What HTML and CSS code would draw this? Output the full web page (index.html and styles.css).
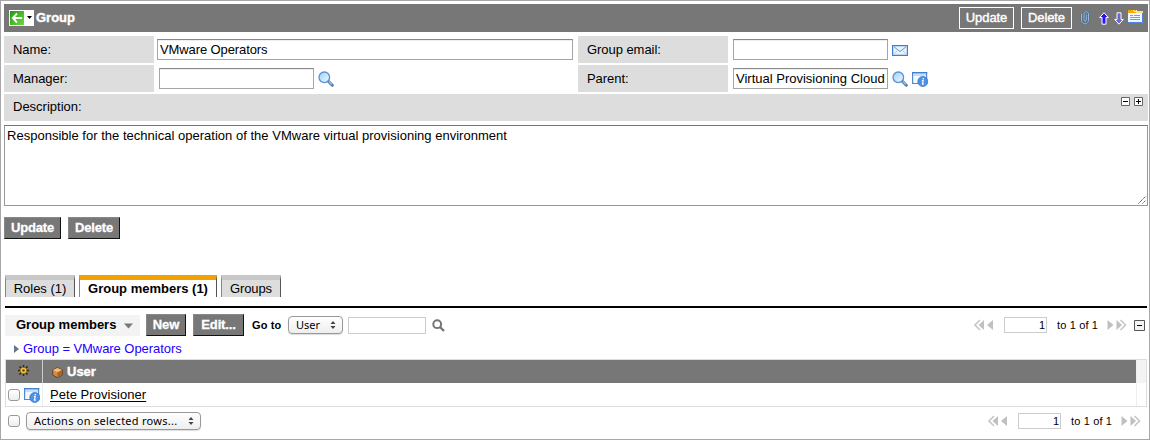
FILE: index.html
```html
<!DOCTYPE html>
<html lang="en">
<head>
<meta charset="utf-8">
<title>Group</title>
<link rel="stylesheet" href="styles.css">
</head>
<body>
<svg class="defs" width="0" height="0">
  <defs>
    <linearGradient id="green" x1="0" y1="0" x2="1" y2="1"><stop offset="0" stop-color="#1f9a10"/><stop offset="1" stop-color="#6bdc3c"/></linearGradient>
    <linearGradient id="gloss" x1="0" y1="0" x2="1" y2="1"><stop offset="0" stop-color="#9cd0fa"/><stop offset="1" stop-color="#f2faff"/></linearGradient>
    <symbol id="lookup" viewBox="0 0 16 16">
      <path d="M10.300 10.200l4 4" stroke="#4f79ad" stroke-width="3" stroke-linecap="round"/>
      <path d="M10.800 10.400l3.200 3.200" stroke="#9cc0e8" stroke-width="1.400"/>
      <circle cx="6.300" cy="6.300" r="5.300" fill="url(#gloss)" stroke="#5b90d4" stroke-width="1.300"/>
    </symbol>
    <symbol id="info" viewBox="0 0 16 16">
      <path d="M.6 1.500h14v11H.6z" fill="#f3f9ff" stroke="#5587cf" stroke-width="1.200"/>
      <path d="M0 1h15.200v1.500H0z" fill="#3f7fd6"/><path d="M1.200 3.500h13v1H1.200z" fill="#9bc3f3"/>
      <circle cx="10.800" cy="10.500" r="5" fill="#4b92e8" stroke="#2f70c4" stroke-width=".7"/>
      <path d="M11.300 7v1.400M9.800 9.500h1.300l-.6 3.700h1.300" fill="none" stroke="#fff" stroke-width="1.200"/>
    </symbol>
    <symbol id="prev" viewBox="0 0 20 12">
      <path d="M10 1v10L4.500 6z" fill="#c0c0c0"/><path d="M6 1L1 6l5 5" fill="none" stroke="#c8c8c8" stroke-width="1.700"/>
      <path d="M19 1v10L13 6z" fill="#c0c0c0"/>
    </symbol>
    <symbol id="next" viewBox="0 0 20 12">
      <path d="M.5 1v10l6-5z" fill="#c0c0c0"/>
      <path d="M9.500 1v10L15 6z" fill="#c0c0c0"/><path d="M13.500 1l5 5-5 5" fill="none" stroke="#c8c8c8" stroke-width="1.700"/>
    </symbol>
    <symbol id="updown" viewBox="0 0 6 8"><path d="M3 0l2.500 3h-5zM3 8l2.500-3h-5z" fill="#444"/></symbol>
  </defs>
</svg>
<main class="window">
  <header class="titlebar">
    <span class="back">
      <svg width="25" height="16" viewBox="0 0 25 16"><path d="M0 0h25v16H0z" fill="#fff"/><path d="M1 1h14v14H1z" fill="url(#green)"/><path d="M13 8H4M8 3.500L3.800 8 8 12.500" fill="none" stroke="#fff" stroke-width="1.900"/><path d="M18 6h5l-2.500 3z" fill="#000"/></svg>
    </span>
    <h1 class="title">Group</h1>
    <button class="outline update">Update</button>
    <button class="outline delete">Delete</button>
    <svg class="clip" width="10" height="14" viewBox="0 0 10 14"><path d="M1.500 3v6.500c0 4.500 7 4.500 7 0V3c0-3-4.500-3-4.500 0v6c0 1.800 2.300 1.800 2.300 0V3.500" fill="none" stroke="#43688c" stroke-width="1.700"/><path d="M1.500 3v6.500c0 4.500 7 4.500 7 0V3c0-3-4.500-3-4.500 0v6c0 1.800 2.300 1.800 2.300 0V3.500" fill="none" stroke="#a8cdec" stroke-width=".8"/></svg>
    <svg class="up" width="10" height="13" viewBox="0 0 10 13"><path d="M5 .8l4.300 4.700H7v6.700H3V5.500H.7z" fill="#2a10ff" stroke="#fff"/></svg>
    <svg class="down" width="10" height="13" viewBox="0 0 10 13"><path d="M5 12.200L.7 7.500H3V.8h4v6.700h2.300z" fill="#6a6ac6" stroke="#fff"/></svg>
    <svg class="form-icon" width="16" height="14" viewBox="0 0 16 14"><path d="M1 1h15v12H1z" fill="#eef6ff"/><path d="M1 0h8v3H1z" fill="#f5a800"/><path d="M9 1h7v2H9z" fill="#ffe08a"/><path d="M6 0l2 2 2-2" fill="none" stroke="#fff3c0"/><path d="M1 12.500h14.500V3" fill="none" stroke="#4b86dd"/><path d="M3 5.500h3M7 5.500h6M3 7.500h10M3 9.500h10" stroke="#6ba0e6"/></svg>
  </header>

  <section class="fields">
    <div class="label">Name:</div>
    <div class="cell"><div class="input wide tight">VMware Operators</div></div>
    <div class="label">Group email:</div>
    <div class="cell ref"><div class="input"></div>
      <svg class="mail" width="16" height="11" viewBox="0 0 16 11"><path d="M.6.600h14.800v9.800H.6z" fill="#e6f3ff" stroke="#3c7ed6" stroke-width="1.200"/><path d="M1.500 9.500l4-4M14.500 9.500l-4-4" fill="none" stroke="#b5cfec"/><path d="M2 1.800l6 4.700 6-4.700" fill="none" stroke="#55799f" stroke-width=".8"/></svg>
    </div>
    <div class="label">Manager:</div>
    <div class="cell manager"><div class="input"></div><svg class="icon" width="16" height="16"><use href="#lookup"/></svg></div>
    <div class="label">Parent:</div>
    <div class="cell ref"><div class="input">Virtual Provisioning Cloud</div><svg class="icon" width="16" height="16"><use href="#lookup"/></svg><svg class="icon" width="16" height="16"><use href="#info"/></svg></div>
  </section>

  <div class="description-head"><span>Description:</span>
    <div class="sizers">
      <svg width="9" height="9" viewBox="0 0 9 9"><path d="M.5.5h8v8h-8z" fill="#fff" stroke="#666"/><path d="M2 4.500h5" stroke="#000"/></svg>
      <svg width="9" height="9" viewBox="0 0 9 9"><path d="M.5.5h8v8h-8z" fill="#fff" stroke="#666"/><path d="M2 4.500h5M4.500 2v5" stroke="#000"/></svg>
    </div>
  </div>
  <div class="textarea"><span>Responsible for the technical operation of the VMware virtual provisioning environment</span>
    <svg class="grip" width="8" height="8" viewBox="0 0 8 8"><path d="M.5 7.500l7-7M4.500 7.500l3-3" stroke="#555" stroke-dasharray="1.400 .5"/></svg>
  </div>
  <div class="actions"><button class="solid update-b">Update</button><button class="solid delete-b">Delete</button></div>

  <nav class="tabs">
    <a class="tab roles">Roles (1)</a>
    <a class="tab active">Group members (1)</a>
    <a class="tab groups">Groups</a>
  </nav>

  <section class="list">
    <div class="toolbar">
      <div class="list-title"><span>Group members</span><svg width="9" height="6" viewBox="0 0 9 6"><path d="M0 .5h9L4.500 5.500z" fill="#777"/></svg></div>
      <button class="solid new">New</button>
      <button class="solid edit">Edit...</button>
      <b class="goto">Go to</b>
      <div class="select user"><span>User</span><svg width="6" height="8"><use href="#updown"/></svg></div>
      <div class="search-box"></div>
      <svg class="search" width="13" height="13" viewBox="0 0 13 13"><circle cx="5.200" cy="5.200" r="3.900" fill="none" stroke="#777" stroke-width="2"/><path d="M8 8l4 4" stroke="#777" stroke-width="2.400"/></svg>
      <div class="pager">
        <svg width="20" height="12"><use href="#prev"/></svg><div class="page">1</div><span>to 1 of 1</span><svg width="20" height="12"><use href="#next"/></svg>
        <svg class="collapse" width="11" height="11" viewBox="0 0 11 11"><path d="M.5.5h10v10H.5z" fill="#f4f4f4" stroke="#555"/><path d="M3 5.500h5" stroke="#000"/></svg>
      </div>
    </div>
    <div class="crumb"><svg width="5" height="8" viewBox="0 0 5 8"><path d="M0 0l5 4-5 4z" fill="#667788"/></svg><a>Group = VMware Operators</a></div>
    <div class="table">
      <div class="th gear-cell"><svg width="11" height="11" viewBox="0 0 11 11"><path d="M5.500 0v11M0 5.500h11M1.500 1.500l8 8M9.500 1.500l-8 8" stroke="#2f250d" stroke-width="1.500"/><circle cx="5.500" cy="5.500" r="3.300" fill="#f4c34a" stroke="#7c5a0b" stroke-width=".7"/><circle cx="5.500" cy="5.500" r="1.200" fill="#5c4711"/></svg></div>
      <div class="th user-head"><svg width="11" height="11" viewBox="0 0 11 11"><path d="M.7 3L5.500.700l4.800 2.300v5L5.500 10.600.700 8z" fill="#d08c45" stroke="#5e3511" stroke-width=".8"/><path d="M1 3.100L5.500 5.300 10 3.100 5.500 1z" fill="#f5bd78"/><path d="M5.500 5.300L10 3.200v4.700l-4.500 2.300z" fill="#a5662b"/></svg><b>User</b></div>
      <div class="gutter head"></div>
      <div class="row-tools"><i class="check"></i><svg width="16" height="16"><use href="#info"/></svg></div>
      <div class="row-name"><a>Pete Provisioner</a></div>
      <div class="gutter"></div>
    </div>
    <div class="footer">
      <i class="check"></i>
      <div class="select bulk"><span>Actions on selected rows...</span><svg width="6" height="8"><use href="#updown"/></svg></div>
      <div class="pager"><svg width="20" height="12"><use href="#prev"/></svg><div class="page">1</div><span>to 1 of 1</span><svg width="20" height="12"><use href="#next"/></svg></div>
    </div>
  </section>
</main>
</body>
</html>
```
FILE: styles.css
```css
* { box-sizing: border-box; }
body { margin: 0; background: #fff; color: #000; font: 13px "Liberation Sans", Arial, sans-serif; }
svg { display: block; flex: none; }
.defs { position: absolute; }
.window { width: 1150px; height: 440px; border: 1px solid #a8a8a8; padding: 3px 1px 0 3px; overflow: hidden; white-space: nowrap; }
button { font: 13px "Liberation Sans", Arial, sans-serif; color: #fff; padding: 0; border-radius: 0; flex: none; }

.titlebar { height: 28px; background: #777; display: flex; align-items: center; padding-left: 5px; }
.title { margin: 0 auto 0 2px; color: #fff; font-size: 13px; line-height: 16px; -webkit-text-stroke: .4px #fff; }
.outline { height: 22px; background: transparent; border: 1px solid #fff; -webkit-text-stroke: .4px #fff; padding-bottom: 2px; letter-spacing: -.1px; }
.update { width: 55px; margin-right: 7px; }
.delete { width: 51px; margin-right: 8px; }
.clip { margin-right: 9px; }
.up { margin-right: 5px; }
.down { margin-right: 3px; }
.form-icon { margin: 0 5px 2px 0; }

.fields { display: grid; grid-template-columns: 150px 424px 150px 1fr; grid-template-rows: 27px 27px; row-gap: 2px; margin-top: 4px; }
.label { background: #ddd; padding-left: 9px; line-height: 27px; letter-spacing: -.05px; }
.cell { display: flex; align-items: center; padding-left: 3px; }
.cell.manager, .cell.ref { padding-left: 5px; }
.input { width: 155px; height: 21px; border: 1px solid #a5a5a5; border-top-color: #888; box-shadow: inset 0 1px #eee; line-height: 19px; padding-left: 2px; overflow: hidden; }
.input.wide { width: 416px; }
.input.tight { letter-spacing: -.1px; }
.icon { margin-left: 4px; }
.mail { margin: 1px 0 0 4px; }
.description-head { display: flex; justify-content: space-between; margin-top: 2px; height: 27px; background: #ddd; line-height: 26px; padding: 0 5px 0 9px; }
.sizers { display: flex; gap: 4px; padding-top: 3px; }
.textarea { display: flex; justify-content: space-between; height: 81px; margin-top: 4px; border: 1px solid #999; border-top-color: #777; padding: 1px 1px 1px 2px; line-height: 18px; letter-spacing: .015px; }
.grip { align-self: flex-end; }
.actions { display: flex; gap: 7px; margin-top: 11px; }
.solid { height: 22px; background: #777; border: 1px solid #888; border-right-color: #111; border-bottom-color: #111; font-weight: bold; padding-bottom: 2px; letter-spacing: -.15px; -webkit-text-stroke: .3px #fff; }
.update-b { width: 57px; }
.delete-b { width: 52px; }

.tabs { display: flex; gap: 4px; height: 22px; margin: 36px 0 0 1px; }
.tab { background: #ddd; border-top: 5px solid #c8c8c8; border-left: 1px solid #888; border-right: 1px solid #555; text-align: center; line-height: 17px; }
.roles { width: 70px; }
.active { width: 138px; background: #fff; border-top-color: #f2a200; font-weight: bold; }
.groups { width: 60px; letter-spacing: -.1px; }
.list { margin: 9px 1px 0; border-top: 2px solid #000; }
.toolbar { display: flex; align-items: center; height: 22px; margin-top: 6px; }
.list-title { display: flex; align-items: center; gap: 8px; width: 135px; height: 21px; padding: 0 0 1px 11px; background: #f3f3f3; font-weight: bold; margin-right: 6px; }
.list-title svg { margin-top: 2px; }
.new { width: 40px; margin-right: 7px; }
.edit { width: 51px; margin-right: 8px; }
.goto { font-size: 11px; width: 36px; letter-spacing: .15px; padding-bottom: 1px; }
.select { display: flex; align-items: center; justify-content: space-between; height: 18px; border: 1px solid #999; border-radius: 4px; background: linear-gradient(#fff, #eee); font: 11px "Noto Sans", "Open Sans", sans-serif; padding: 0 6px 0 7px; flex: none; box-shadow: 0 1px 1px #ddd; }
.select span { margin-top: -2px; }
.user { width: 55px; }
.search-box { width: 78px; height: 17px; border: 1px solid #ccc; margin-left: 5px; }
.search { margin: 1px 0 0 6px; }
.pager { display: flex; align-items: center; margin-left: auto; font-size: 11px; }
.page { width: 43px; height: 16px; border: 1px solid #ccc; text-align: right; line-height: 15px; padding-right: 1px; margin: 0 10px; }
.pager span { width: 41px; margin-right: 9px; letter-spacing: .15px; padding-bottom: 1px; }
.collapse { margin: 1px 2px 0 7px; }
.crumb { display: flex; align-items: center; gap: 4px; height: 23px; padding: 2px 0 0 9px; color: #20f; letter-spacing: -.06px; }
.table { display: grid; grid-template-columns: 37px 1fr 10px; grid-template-rows: 23px 23px; border: 1px solid #ddd; height: 48px; }
.th { background: #777; display: flex; align-items: center; color: #fff; }
.gear-cell { border-right: 1px solid #ccc; padding: 0 0 2px 12px; }
.user-head { padding-left: 9px; gap: 4px; -webkit-text-stroke: .4px #fff; }
.user-head svg { margin-top: 2px; }
.gutter { border-left: 1px solid #eee; }
.head { background: #f3f3f3; }
.row-tools { display: flex; align-items: center; padding-left: 2px; gap: 4px; border-right: 1px solid #eee; }
.check { display: block; flex: none; width: 12px; height: 12px; border: 1px solid #999; border-radius: 3px; background: linear-gradient(#fff, #eee); }
.row-name { padding-left: 7px; line-height: 23px; letter-spacing: .05px; }
.row-name a { text-decoration: underline; text-underline-offset: 2px; }
.footer { display: flex; align-items: center; height: 18px; margin-top: 5px; padding-left: 3px; }
.bulk { width: 175px; margin-left: 6px; letter-spacing: .27px; }
.footer .pager { padding-right: 6px; }
```
